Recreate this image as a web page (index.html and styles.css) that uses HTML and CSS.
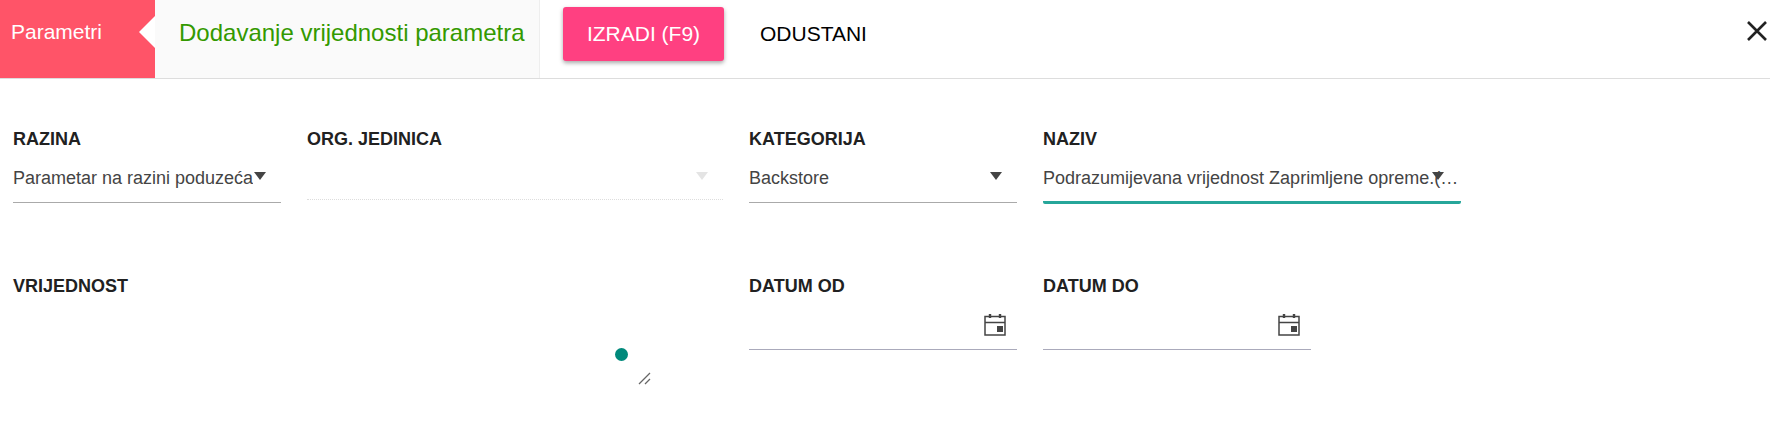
FILE: index.html
```html
<!DOCTYPE html>
<html lang="en">
<head>
    <meta charset="UTF-8">
    <meta name="viewport" content="width=device-width, initial-scale=1.0">
    <title>Parametri</title>
    <link rel="stylesheet" href="styles.css">
</head>
<body>
    <div class="header">
        <div class="module">Parametri</div>
        <div class="page-title">Dodavanje vrijednosti parametra</div>
        <div class="actions">
            <button type="button" class="btn-create">IZRADI (F9)</button>
            <button type="button" class="btn-cancel">ODUSTANI</button>
        </div>
        <button type="button" class="btn-close" aria-label="Zatvori">
            <svg width="20" height="20" viewBox="0 0 20 20"><path d="M1 1L19 19M19 1L1 19" stroke="#222" stroke-width="2.6" fill="none"/></svg>
        </button>
    </div>

    <form class="form">
        <div class="row row-first">
            <div class="field w-268">
                <label>RAZINA</label>
                <div class="control">
                    <span class="value">Parametar na razini poduzeća</span>
                    <span class="arrow arrow-razina"></span>
                </div>
            </div>
            <div class="field w-416 disabled">
                <label>ORG. JEDINICA</label>
                <div class="control">
                    <span class="value"></span>
                    <span class="arrow arrow-org"></span>
                </div>
            </div>
            <div class="field w-268">
                <label>KATEGORIJA</label>
                <div class="control">
                    <span class="value">Backstore</span>
                    <span class="arrow arrow-cat"></span>
                </div>
            </div>
            <div class="field w-418 focused">
                <label>NAZIV</label>
                <div class="control">
                    <span class="value">Podrazumijevana vrijednost Zaprimljene opreme.(pozicija)</span>
                    <span class="arrow arrow-naziv"></span>
                </div>
            </div>
        </div>

        <div class="row row-second">
            <div class="field w-710 field-value">
                <label>VRIJEDNOST</label>
                <span class="dot"></span>
                <svg class="resize" width="14" height="14" viewBox="0 0 14 14"><path d="M1 13L12 2M7 13L12 8" stroke="#666" stroke-width="1.3" fill="none"/></svg>
            </div>
            <div class="field w-268">
                <label>DATUM OD</label>
                <div class="control control-date">
                    <svg width="22" height="23" viewBox="0 0 22 23"><path d="M1 3.5H21V22H1ZM1 9.5H21" stroke="#444" stroke-width="1.5" fill="none"/><path d="M6 1V5M16 1V5" stroke="#444" stroke-width="2.4" fill="none"/><rect x="13" y="13" width="6" height="6" fill="#444"/></svg>
                </div>
            </div>
            <div class="field w-268">
                <label>DATUM DO</label>
                <div class="control control-date">
                    <svg width="22" height="23" viewBox="0 0 22 23"><path d="M1 3.5H21V22H1ZM1 9.5H21" stroke="#444" stroke-width="1.5" fill="none"/><path d="M6 1V5M16 1V5" stroke="#444" stroke-width="2.4" fill="none"/><rect x="13" y="13" width="6" height="6" fill="#444"/></svg>
                </div>
            </div>
        </div>
    </form>
</body>
</html>
```

FILE: styles.css
```css
* {
    box-sizing: border-box;
}
body {
    margin: 0;
    font-family: "Liberation Sans", Arial, sans-serif;
    background-color: #fff;
    color: #212121;
}
.header {
    display: flex;
    height: 79px;
    border-bottom: 1px solid #ddd;
}
.module {
    position: relative;
    flex: none;
    width: 155px;
    padding: 20px 0 0 11px;
    background-color: #ff5468;
    color: #fff;
    font-size: 21px;
    line-height: 23px;
}
/* notch pointing into the pink block */
.module::after {
    content: "";
    position: absolute;
    top: 16px;
    right: 0;
    border-top: 16px solid transparent;
    border-bottom: 16px solid transparent;
    border-right: 16px solid #fff;
}
.page-title {
    flex: none;
    width: 385px;
    padding: 19px 0 0 24px;
    background-color: #fafafa;
    border-right: 1px solid #eee;
    color: #339900;
    font-size: 24px;
    line-height: 27px;
    white-space: nowrap;
}
.actions {
    display: flex;
    align-items: flex-start;
    padding: 7px 0 0 23px;
}
button {
    font-family: inherit;
    border: none;
    background: none;
    cursor: pointer;
}
.btn-create {
    width: 161px;
    height: 54px;
    background-color: #ff4081;
    color: #fff;
    font-size: 21px;
    border-radius: 3px;
    box-shadow: 0 2px 4px rgba(0, 0, 0, 0.35);
}
.btn-cancel {
    height: 54px;
    margin-left: 36px;
    padding: 0;
    color: #000;
    font-size: 21px;
}
.btn-close {
    margin-left: auto;
    margin-right: 3px;
    margin-top: 21px;
    padding: 0;
    width: 20px;
    height: 20px;
}
.form {
    padding: 0 0 0 13px;
}
.row {
    display: flex;
    gap: 26px;
}
.row-first {
    height: 197px;
    padding-top: 50px;
}
.row-second {
    height: 145px;
}
.field {
    position: relative;
}
.w-268 { width: 268px; }
.w-416 { width: 416px; }
.w-418 { width: 418px; }
.w-710 { width: 710px; }
label {
    display: block;
    font-size: 18px;
    font-weight: bold;
    line-height: 20px;
    color: #212121;
}
.control {
    position: relative;
    display: flex;
    height: 54px;
    padding-top: 19px;
    border-bottom: 1px solid #aaa;
}
.value {
    height: 24px;
    font-size: 18px;
    line-height: 20px;
    color: #444;
    white-space: nowrap;
    overflow: hidden;
    text-overflow: ellipsis;
}
.arrow {
    position: absolute;
    top: 23px;
    border-left: 6px solid transparent;
    border-right: 6px solid transparent;
    border-top: 8px solid #444;
}
.arrow-razina {
    left: 241px;
}
.arrow-org {
    left: 389px;
    border-top-color: #e4e4e4;
}
.arrow-cat {
    left: 241px;
}
.arrow-naziv {
    left: 389px;
}
.disabled .control {
    height: 51px;
    border-bottom: 1px dotted #ddd;
}
.focused .control {
    height: 55px;
    border-bottom: 3px solid #26a69a;
    border-radius: 0 0 2px 2px;
}
.control-date {
    justify-content: flex-end;
    height: 54px;
    padding: 17px 11px 0 0;
    border-bottom-color: #aab;
}
.control-date svg {
    display: block;
}
.dot {
    position: absolute;
    left: 602px;
    top: 72px;
    width: 13px;
    height: 13px;
    border-radius: 50%;
    background-color: #00897b;
}
.resize {
    position: absolute;
    left: 625px;
    top: 95px;
}
```
